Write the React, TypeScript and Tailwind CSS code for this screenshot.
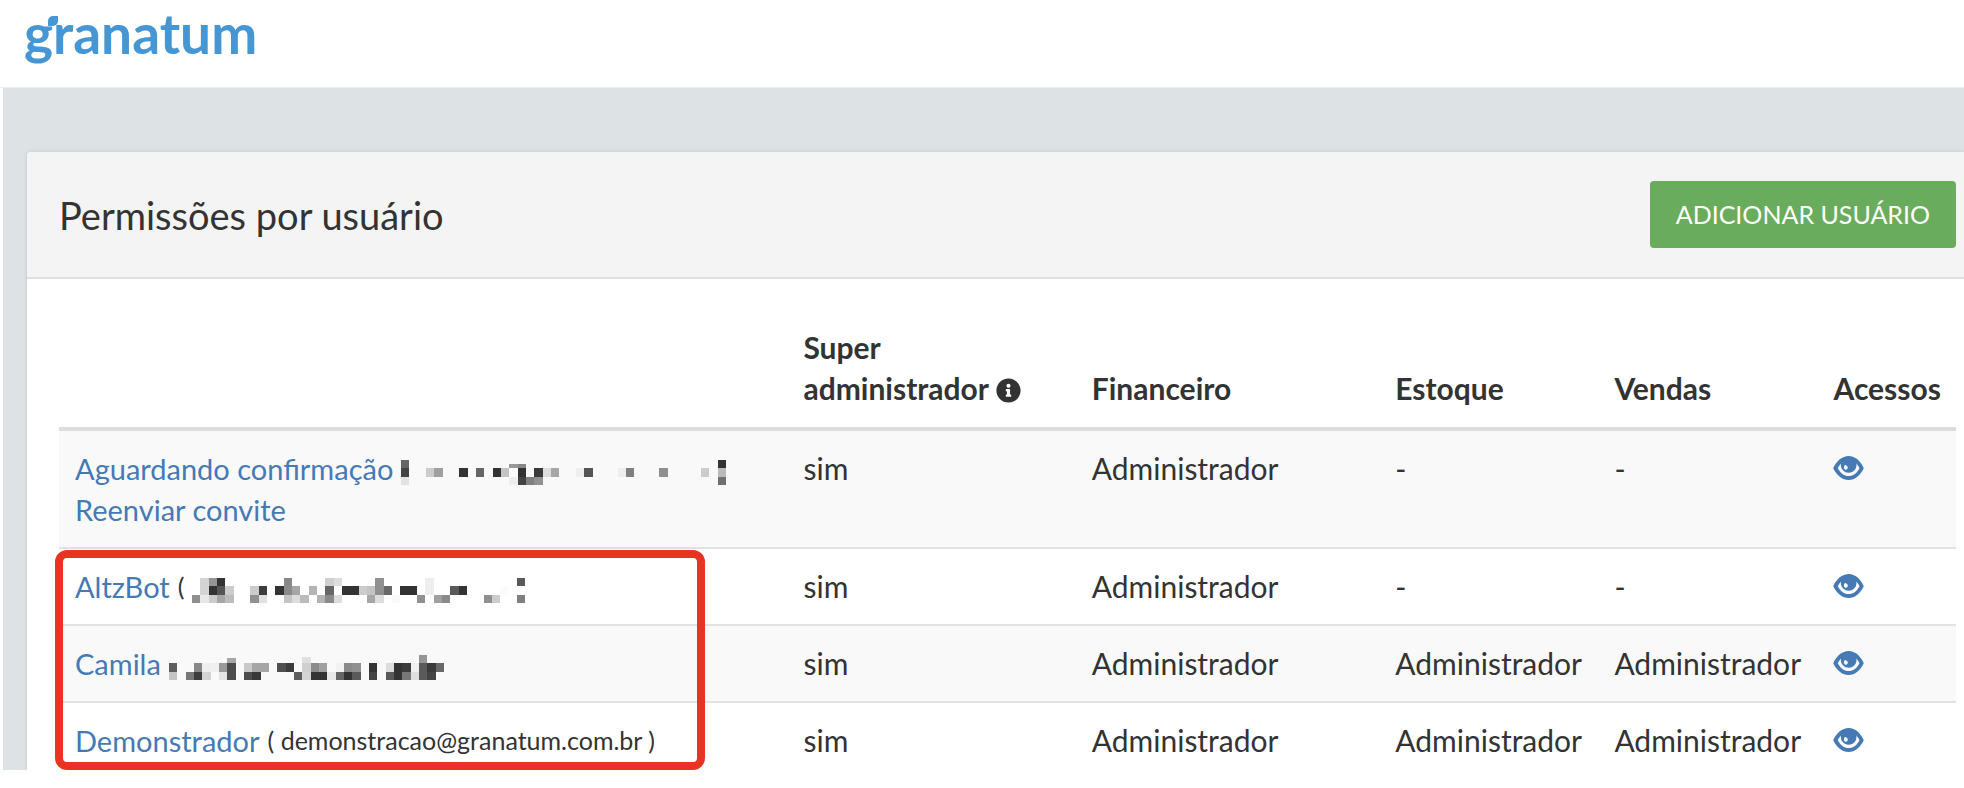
import { FaInfoCircle } from "react-icons/fa";

type Cell = [col: number, row: number, color: string];

type User = {
  name: string;
  email?: string;
  openParen?: boolean;
  mask?: Cell[];
  resend?: boolean;
  superAdmin: string;
  financeiro: string;
  estoque: string;
  vendas: string;
};

// censored e-mails: column, row, color
const maskPending: Cell[] = [
  [0, 0, "#666"], [13, 0.5, "#999"], [14, 0.5, "#888"], [38, 0, "#333"],
  [0, 1, "#444"], [3, 1, "#ccc"], [4, 1, "#a0a0a0"], [7, 1, "#333"], [9, 1, "#666"],
  [11, 1, "#333"], [12, 1, "#c4c4c4"], [13, 1, "#fcfcfc"], [14, 1, "#333"], [15, 1, "#f9f9f9"],
  [16, 1, "#3a3a3a"], [17, 1, "#ddd"], [18, 1, "#a6a6a6"], [21, 1, "#eee"], [22, 1, "#555"],
  [26, 1, "#eee"], [27, 1, "#808080"], [31, 1, "#909090"], [36, 1, "#ccc"], [38, 1, "#bbb"],
  [0, 2, "#e3e3e3"], [13, 2, "#eee"], [14, 2, "#444"], [15, 2, "#808080"], [16, 2, "#909090"],
  [38, 2, "#707070"],
];

const maskAltz: Cell[] = [
  [1, 0, "#d4d4d4"], [2, 0, "#959595"], [3, 0, "#333"], [11, 0, "#888"], [16, 0, "#d0d0d0"],
  [17, 0, "#ddd"], [22, 0, "#909090"], [28, 0, "#eee"], [39, 0, "#595959"],
  [1, 1, "#d4d4d4"], [2, 1, "#333"], [3, 1, "#555"], [4, 1, "#ccc"], [7, 1, "#ccc"],
  [8, 1, "#3c3c3c"], [10, 1, "#333"], [11, 1, "#8a8a8a"], [12, 1, "#a6a6a6"], [14, 1, "#b4b4b4"],
  [16, 1, "#666"], [18, 1, "#333"], [19, 1, "#333"], [20, 1, "#ccc"], [21, 1, "#c4c4c4"],
  [22, 1, "#909090"], [23, 1, "#686868"], [25, 1, "#333"], [26, 1, "#333"], [28, 1, "#eee"],
  [31, 1, "#5a5a5a"], [32, 1, "#333"], [37, 1, "#fcfcfc"],
  [0, 2, "#8f8f8f"], [1, 2, "#e8e8e8"], [2, 2, "#ccc"], [3, 2, "#a6a6a6"], [4, 2, "#bdbdbd"],
  [7, 2, "#909090"], [8, 2, "#e0e0e0"], [11, 2, "#c4c4c4"], [12, 2, "#ddd"], [13, 2, "#bbb"],
  [15, 2, "#b4b4b4"], [16, 2, "#8a8a8a"], [17, 2, "#ddd"], [21, 2, "#a6a6a6"], [22, 2, "#ddd"],
  [24, 2, "#fafafa"], [27, 2, "#909090"], [29, 2, "#a0a0a0"], [30, 2, "#8a8a8a"],
  [35, 2, "#909090"], [36, 2, "#ccc"], [39, 2, "#808080"],
];

const maskCamila: Cell[] = [
  [7, 0.3, "#a6a6a6"], [16, 0.2, "#e0e0e0"], [30, 0, "#969696"],
  [0, 1, "#5e5e5e"], [3, 1, "#888"], [4, 1, "#eee"], [5, 1, "#f0f0f0"], [6, 1, "#999"],
  [7, 1, "#4c4c4c"], [9, 1, "#c9c9c9"], [10, 1, "#a6a6a6"], [11, 1, "#a6a6a6"], [13, 1, "#505050"],
  [14, 1, "#3c3c3c"], [16, 1, "#d0d0d0"], [17, 1, "#8a8a8a"], [18, 1, "#a0a0a0"], [20, 1, "#f2f2f2"],
  [21, 1, "#8a8a8a"], [22, 1, "#909090"], [24, 1, "#333"], [26, 1, "#ddd"], [27, 1, "#333"],
  [28, 1, "#3c3c3c"], [29, 1, "#f0f0f0"], [30, 1, "#5a5a5a"], [31, 1, "#3a3a3a"], [32, 1, "#686868"],
  [0, 2, "#c4c4c4"], [2, 2, "#777"], [3, 2, "#3c3c3c"], [4, 2, "#d4d4d4"], [6, 2, "#e4e4e4"],
  [7, 2, "#4c4c4c"], [9, 2, "#4c4c4c"], [10, 2, "#383838"], [15, 2, "#5e5e5e"], [16, 2, "#d4d4d4"],
  [17, 2, "#333"], [18, 2, "#333"], [19, 2, "#e8e8e8"], [20, 2, "#666"], [21, 2, "#333"],
  [22, 2, "#5a5a5a"], [24, 2, "#444"], [26, 2, "#5a5a5a"], [27, 2, "#333"], [28, 2, "#777"],
  [29, 2, "#e0e0e0"], [30, 2, "#5a5a5a"], [31, 2, "#444"],
];

const users: User[] = [
  {
    name: "Aguardando confirmação",
    mask: maskPending,
    resend: true,
    superAdmin: "sim",
    financeiro: "Administrador",
    estoque: "-",
    vendas: "-",
  },
  {
    name: "AltzBot",
    openParen: true,
    mask: maskAltz,
    superAdmin: "sim",
    financeiro: "Administrador",
    estoque: "-",
    vendas: "-",
  },
  {
    name: "Camila",
    mask: maskCamila,
    superAdmin: "sim",
    financeiro: "Administrador",
    estoque: "Administrador",
    vendas: "Administrador",
  },
  {
    name: "Demonstrador",
    email: "demonstracao@granatum.com.br",
    superAdmin: "sim",
    financeiro: "Administrador",
    estoque: "Administrador",
    vendas: "Administrador",
  },
];

const Logo = () => (
  <a href="#" className="relative inline-block text-[55px] leading-[66px] font-bold text-[#4696d3]">
    granatum
    <svg viewBox="0 0 10 10" className="absolute top-4 left-6 size-[10px]" fill="currentColor" aria-hidden="true">
      <path d="M10 0v5a5 5 0 0 1-5 5H0V5a5 5 0 0 1 5-5z" />
    </svg>
  </a>
);

const EyeIcon = () => (
  <svg viewBox="0 0 93 73" className="h-6 w-[31px]" fill="currentColor" fillRule="evenodd" aria-hidden="true">
    <path d="M0 37C10 15 27 0 47 0s36 15 46 37C83 58 66 73 47 73S10 58 0 37ZM14 37C22 52 33 61 47 61s25-9 33-24C77 30 73 25 68 21H26C21 25 17 30 14 37Z" />
    <path d="M23 27a24 24 0 1 0 48 0a24 24 0 1 0-48 0ZM35 28c-5 6-2 14 5 14c6-3 6-8 1-12c-2-2-4-3-6-2Z" />
  </svg>
);

const Mask = ({ cells }: { cells: Cell[] }) => {
  const cols = Math.max(...cells.map(([col]) => col)) + 1;

  return (
    <svg
      viewBox={`0 0 ${cols} 3`}
      className="mt-2 h-[25px] shrink-0"
      shapeRendering="crispEdges"
      aria-hidden="true"
    >
      {cells.map(([col, row, color]) => (
        <rect key={`${col}-${row}`} x={col} y={row} width="1" height={row < 1 ? 1 - row : 1} fill={color} />
      ))}
    </svg>
  );
};

const App = () => {
  return (
    <div className="bg-white font-[Lato,sans-serif] text-[30px] leading-[41px] text-[#333]">
      <header className="h-[88px] border-b border-[#eee] px-6">
        <Logo />
      </header>

      <main className="ml-[3px] overflow-hidden bg-[#dde2e5] pt-16 pl-6">
        <section className="rounded-tl bg-white shadow-[0_0_4px_rgba(0,0,0,0.12)]">
          <div className="flex items-center justify-between rounded-tl border-b-2 border-[#e0e0e0] bg-[#f4f4f4] py-[29px] pr-2 pl-8">
            <h1 className="text-[38px] leading-[46px]">Permissões por usuário</h1>
            <button type="button" className="rounded bg-[#6aac5d] px-[26px] py-[13px] text-[25px] leading-[41px] text-white">
              ADICIONAR USUÁRIO
            </button>
          </div>

          <div className="pt-8 pr-2 pl-8">
            <div className="relative">
              <table className="w-full table-fixed border-collapse text-left">
                <thead>
                  <tr className="border-b-4 border-[#ddd] align-bottom">
                    <th className="w-[38.4%]"></th>
                    <th className="w-[15.2%] px-4 pt-4 pb-[18px] whitespace-nowrap">
                      Super
                      <br />
                      administrador <FaInfoCircle className="mb-1 inline size-[25px]" />
                    </th>
                    <th className="w-[16%] px-4 pt-4 pb-[18px]">Financeiro</th>
                    <th className="w-[11.55%] px-4 pt-4 pb-[18px]">Estoque</th>
                    <th className="w-[11.55%] px-4 pt-4 pb-[18px]">Vendas</th>
                    <th className="pt-4 pb-[18px] pl-4">Acessos</th>
                  </tr>
                </thead>
                <tbody>
                  {users.map((user) => (
                    <tr key={user.name} className="group border-t-2 border-[#e2e2e2] align-top odd:bg-[#f9f9f9]">
                      <td className="px-4 py-[17px] text-[29px] group-last:pb-[9px]">
                        <div className="flex h-[41px] items-center gap-2 whitespace-nowrap">
                          <a href="#" className="text-[#457ab5]">{user.name}</a>
                          {user.openParen && <span className="text-[25px]">(</span>}
                          {user.mask && <Mask cells={user.mask} />}
                          {user.email && <span className="text-[25px]">( {user.email} )</span>}
                        </div>
                        {user.resend && <a href="#" className="text-[#457ab5]">Reenviar convite</a>}
                      </td>
                      <td className="px-4 py-[17px] group-last:pb-[9px]">{user.superAdmin}</td>
                      <td className="px-4 py-[17px] group-last:pb-[9px]">{user.financeiro}</td>
                      <td className="px-4 py-[17px] group-last:pb-[9px]">{user.estoque}</td>
                      <td className="px-4 py-[17px] group-last:pb-[9px]">{user.vendas}</td>
                      <td className="px-4 py-[17px] group-last:pb-[9px]">
                        <a href="#" aria-label={`Acessos de ${user.name}`} className="flex h-10 items-center text-[#457ab5]">
                          <EyeIcon />
                        </a>
                      </td>
                    </tr>
                  ))}
                </tbody>
              </table>

              {/* highlight around the last three users */}
              <div className="pointer-events-none absolute bottom-0 -left-1 h-[220px] w-[650px] rounded-xl border-8 border-[#e93323]" />
            </div>
          </div>
        </section>
      </main>
    </div>
  );
};

export default App;
